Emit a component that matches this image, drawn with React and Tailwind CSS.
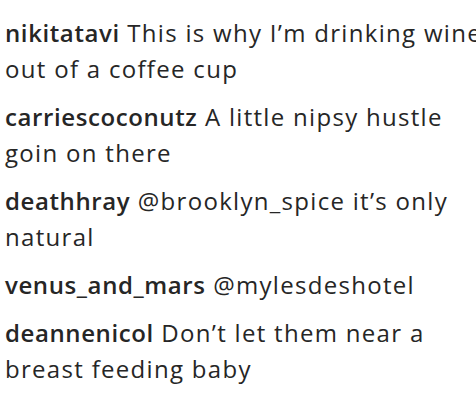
import React from 'react';

const comments = [
    { user: 'nikitatavi', lines: ['This is why I’m drinking wine', 'out of a coffee cup'] },
    { user: 'carriescoconutz', lines: ['A little nipsy hustle', 'goin on there'] },
    { user: 'deathhray', lines: ['@brooklyn_spice it’s only', 'natural'] },
    { user: 'venus_and_mars', lines: ['@mylesdeshotel'] },
    { user: 'deannenicol', lines: ['Don’t let them near a', 'breast feeding baby'] },
];

function Comment({ user, lines }) {
    return (
        <div className="flex flex-col">
            <div className="whitespace-nowrap">
                <span className="font-semibold tracking-[0.6px]">{user}</span> {lines[0]}
            </div>
            {lines.slice(1).map((line) => (
                <div key={line} className="whitespace-nowrap">
                    {line}
                </div>
            ))}
        </div>
    );
}

export default function App() {
    return (
        <div
            className="w-[476px] h-[402px] overflow-hidden bg-white text-[#262626] pl-[5px] pt-[15px] flex flex-col gap-[12px] text-[24px] leading-[36px] tracking-[1.3px]"
            style={{ fontFamily: '"Open Sans", sans-serif' }}
        >
            {comments.map((c) => (
                <Comment key={c.user} user={c.user} lines={c.lines} />
            ))}
        </div>
    );
}
